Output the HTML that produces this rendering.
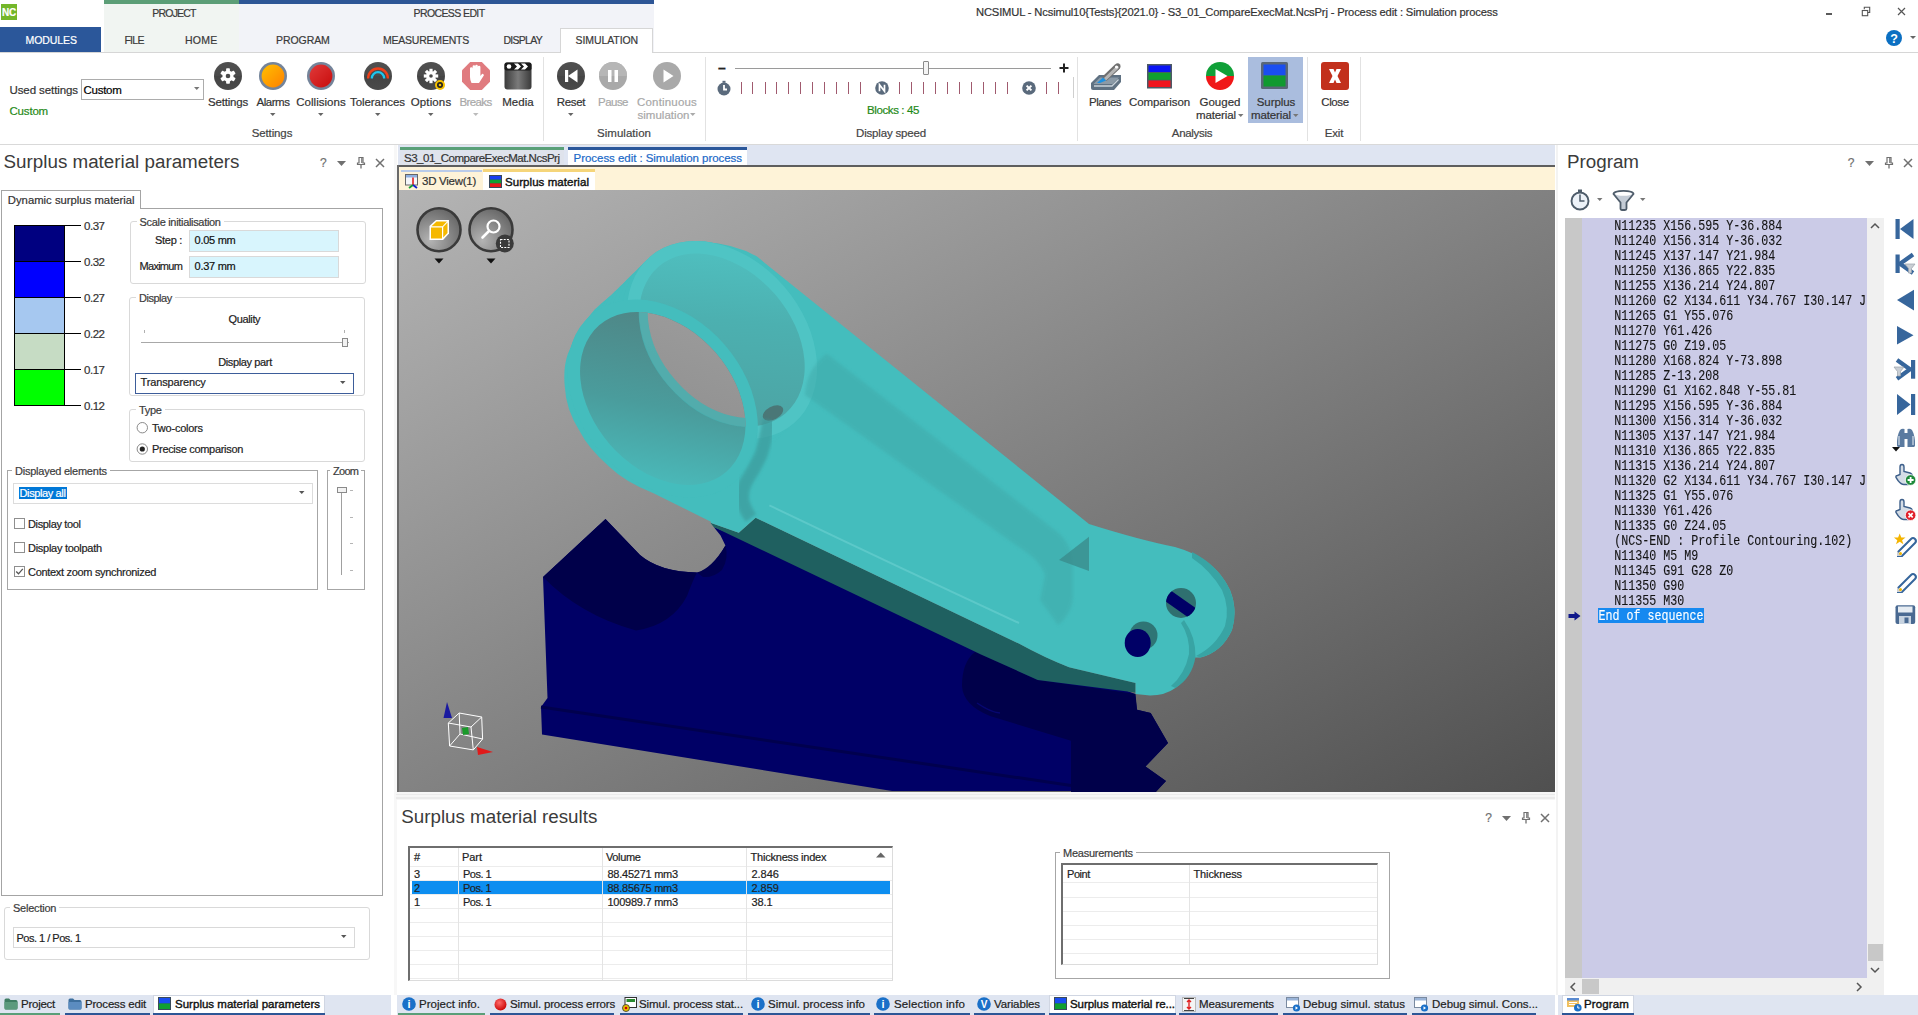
<!DOCTYPE html>
<html><head><meta charset="utf-8"><title>NCSIMUL</title>
<style>
*{margin:0;padding:0;box-sizing:border-box}
html,body{width:1918px;height:1015px;overflow:hidden;background:#fff;font-family:"Liberation Sans",sans-serif;color:#333;position:relative}
.a{position:absolute}
.t{position:absolute;white-space:nowrap;line-height:1;-webkit-text-stroke:0.2px currentColor}
svg{position:absolute;overflow:visible}
</style></head><body>
<div class="a" style="left:1px;top:4px;width:16px;height:16px;background:#74b72a;"></div>
<div class="t" style="left:2.00px;top:8.04px;font-size:10px;color:#fff;font-weight:bold;letter-spacing:-0.222px;">NC</div>
<div class="a" style="left:0px;top:27px;width:101px;height:25px;background:#2b579a;"></div>
<div class="t" style="left:25.60px;top:34.91px;font-size:10.5px;color:#fff;letter-spacing:-0.089px;">MODULES</div>
<div class="a" style="left:104px;top:0px;width:135px;height:53px;background:#f1f5f2;"></div>
<div class="a" style="left:104px;top:0px;width:135px;height:4px;background:#5c9e77;"></div>
<div class="a" style="left:239px;top:0px;width:415px;height:53px;background:#f2f3f8;"></div>
<div class="a" style="left:239px;top:0px;width:415px;height:4px;background:#2d5696;"></div>
<div class="a" style="left:0px;top:52px;width:1918px;height:1px;background:#d6d6d6;"></div>
<div class="t" style="left:152.30px;top:8.01px;font-size:10.5px;color:#3a3a3a;letter-spacing:-0.800px;">PROJECT</div>
<div class="t" style="left:413.50px;top:8.01px;font-size:10.5px;color:#3a3a3a;letter-spacing:-0.598px;">PROCESS EDIT</div>
<div class="t" style="left:124.40px;top:34.91px;font-size:10.5px;color:#3a3a3a;letter-spacing:-0.694px;">FILE</div>
<div class="t" style="left:185.00px;top:34.91px;font-size:10.5px;color:#3a3a3a;letter-spacing:0.250px;">HOME</div>
<div class="t" style="left:276.00px;top:34.91px;font-size:10.5px;color:#3a3a3a;letter-spacing:-0.065px;">PROGRAM</div>
<div class="t" style="left:383.00px;top:34.91px;font-size:10.5px;color:#3a3a3a;letter-spacing:-0.223px;">MEASUREMENTS</div>
<div class="t" style="left:503.50px;top:34.91px;font-size:10.5px;color:#3a3a3a;letter-spacing:-0.739px;">DISPLAY</div>
<div class="a" style="left:560px;top:28px;width:93px;height:25px;background:#fff;border:1px solid #d6d6d6;border-bottom:none"></div>
<div class="t" style="left:575.60px;top:34.91px;font-size:10.5px;color:#3a3a3a;letter-spacing:-0.089px;">SIMULATION</div>
<div class="t" style="left:976.00px;top:7.42px;font-size:11.2px;color:#333;letter-spacing:-0.152px;">NCSIMUL - Ncsimul10{Tests}{2021.0} - S3_01_CompareExecMat.NcsPrj - Process edit : Simulation process</div>
<div class="a" style="left:1826px;top:13px;width:6px;height:2px;background:#5a5a5a;"></div>
<svg style="left:1860px;top:5px" width="12" height="12" viewBox="0 0 12 12"><path d="M4.3 4.3V2.3H9.7V7.5H7.7" fill="none" stroke="#555" stroke-width="1.1"/><rect x="2.3" y="5.5" width="5.4" height="5.2" fill="none" stroke="#555" stroke-width="1.1"/></svg>
<svg style="left:1896px;top:6px" width="11" height="11" viewBox="0 0 11 11"><path d="M2 2L9 9M9 2L2 9" stroke="#555" stroke-width="1.2"/></svg>
<svg style="left:1885.2px;top:28.7px" width="18" height="18" viewBox="0 0 18 18"><circle cx="9" cy="9" r="8" fill="#0b6fc2"/><text x="9" y="13.6" font-family="Liberation Sans" font-weight="bold" font-size="12.5" fill="#fff" text-anchor="middle">?</text></svg>
<svg style="left:1910px;top:35.5px" width="7" height="5" viewBox="0 0 7 5"><path d="M0 0H6L3 3Z" fill="#666"/></svg>
<div class="a" style="left:0px;top:144px;width:1918px;height:1px;background:#d9d9d9;"></div>
<div class="t" style="left:9.50px;top:84.77px;font-size:11.5px;color:#333;letter-spacing:-0.090px;">Used settings</div>
<div class="a" style="left:81px;top:79px;width:123px;height:21px;border:1px solid #acacac;background:#fff"></div>
<div class="t" style="left:83.50px;top:84.77px;font-size:11.5px;color:#000;letter-spacing:-0.270px;">Custom</div>
<svg style="left:194px;top:87px" width="6" height="4" viewBox="0 0 6 4"><path d="M0 0H5.5L2.75 3Z" fill="#777"/></svg>
<div class="t" style="left:9.50px;top:105.77px;font-size:11.5px;color:#1f8a18;letter-spacing:-0.187px;">Custom</div>
<svg style="left:214px;top:62px" width="28" height="28" viewBox="0 0 28 28"><defs><linearGradient id="gd" x1="0" y1="0" x2="0" y2="1"><stop offset="0" stop-color="#505050"/><stop offset="0.5" stop-color="#4a4a4a"/><stop offset="0.5" stop-color="#444"/><stop offset="1" stop-color="#4a4a4a"/></linearGradient></defs><circle cx="14" cy="14" r="14" fill="url(#gd)"/><g fill="#fff"><circle cx="14" cy="14" r="5.6"/><rect x="12.1" y="6.2" width="3.8" height="4" rx="0.8" transform="rotate(0 14 14)"/><rect x="12.1" y="6.2" width="3.8" height="4" rx="0.8" transform="rotate(60 14 14)"/><rect x="12.1" y="6.2" width="3.8" height="4" rx="0.8" transform="rotate(120 14 14)"/><rect x="12.1" y="6.2" width="3.8" height="4" rx="0.8" transform="rotate(180 14 14)"/><rect x="12.1" y="6.2" width="3.8" height="4" rx="0.8" transform="rotate(240 14 14)"/><rect x="12.1" y="6.2" width="3.8" height="4" rx="0.8" transform="rotate(300 14 14)"/></g><circle cx="14" cy="14" r="2.3" fill="#4a4a4a"/></svg>
<svg style="left:259px;top:62px" width="28" height="28" viewBox="0 0 28 28"><defs><linearGradient id="ga" x1="0" y1="0" x2="1" y2="1"><stop offset="0" stop-color="#ffc000"/><stop offset="1" stop-color="#ff8000"/></linearGradient></defs><circle cx="14" cy="14" r="14" fill="#74849a"/><circle cx="14" cy="14" r="11.4" fill="url(#ga)"/></svg>
<svg style="left:307px;top:62px" width="28" height="28" viewBox="0 0 28 28"><defs><linearGradient id="gc" x1="0" y1="0" x2="1" y2="1"><stop offset="0" stop-color="#e03a3a"/><stop offset="1" stop-color="#c80c0c"/></linearGradient></defs><circle cx="14" cy="14" r="14" fill="#74849a"/><circle cx="14" cy="14" r="11.4" fill="url(#gc)"/></svg>
<svg style="left:364px;top:62px" width="28" height="28" viewBox="0 0 28 28"><circle cx="14" cy="14" r="14" fill="url(#gd)"/><path d="M4.1 16.4A9.9 9.9 0 0 1 23.9 16.4" fill="none" stroke="#f0401a" stroke-width="2.3"/><path d="M7.8 16.4A6.2 6.2 0 0 1 20.2 16.4" fill="none" stroke="#1cc8f0" stroke-width="2.3"/></svg>
<svg style="left:417px;top:62px" width="30" height="30" viewBox="0 0 30 30"><circle cx="14" cy="14" r="14" fill="url(#gd)"/><g fill="#fff"><circle cx="14" cy="14" r="4.8"/><rect x="12.4" y="6.8" width="3.2" height="3.6" transform="rotate(0 14 14)"/><rect x="12.4" y="6.8" width="3.2" height="3.6" transform="rotate(45 14 14)"/><rect x="12.4" y="6.8" width="3.2" height="3.6" transform="rotate(90 14 14)"/><rect x="12.4" y="6.8" width="3.2" height="3.6" transform="rotate(135 14 14)"/><rect x="12.4" y="6.8" width="3.2" height="3.6" transform="rotate(180 14 14)"/><rect x="12.4" y="6.8" width="3.2" height="3.6" transform="rotate(225 14 14)"/><rect x="12.4" y="6.8" width="3.2" height="3.6" transform="rotate(270 14 14)"/><rect x="12.4" y="6.8" width="3.2" height="3.6" transform="rotate(315 14 14)"/></g><circle cx="14" cy="14" r="1.8" fill="#4a4a4a"/><circle cx="23" cy="23" r="5" fill="#f4c000"/><circle cx="23" cy="23" r="3" fill="#222"/><circle cx="23" cy="23" r="1.3" fill="#f4c000"/></svg>
<svg style="left:462px;top:62px" width="28" height="28" viewBox="0 0 28 28"><path d="M8.2 0H19.8L28 8.2V19.8L19.8 28H8.2L0 19.8V8.2Z" fill="#e07b7f"/><path d="M8 11V6.5a1.3 1.3 0 0 1 2.6 0V11V4.5a1.3 1.3 0 0 1 2.6 0V11V4a1.3 1.3 0 0 1 2.6 0V11V5a1.3 1.3 0 0 1 2.6 0V14L20 12a1.3 1.3 0 0 1 1.8 1.6L17 21H9.5Q8 18 8 15Z" fill="#fff"/></svg>
<svg style="left:504px;top:62px" width="28" height="28" viewBox="0 0 28 28"><defs><linearGradient id="gm" x1="0" y1="0" x2="1" y2="0"><stop offset="0" stop-color="#3a3a3a"/><stop offset="0.5" stop-color="#7a7a7a"/><stop offset="1" stop-color="#3a3a3a"/></linearGradient></defs><rect x="0.5" y="0.5" width="27" height="27" rx="3" fill="url(#gm)"/><rect x="0.5" y="0.5" width="27" height="8" rx="2" fill="#1a1a1a"/><circle cx="5" cy="4.5" r="2.3" fill="#fff"/><path d="M10 1.5H14L17 4.5L14 7.5H10L13 4.5Z M17 1.5H21L24 4.5L21 7.5H17L20 4.5Z" fill="#fff"/></svg>
<svg style="left:557px;top:62px" width="28" height="28" viewBox="0 0 28 28"><circle cx="14" cy="14" r="14" fill="url(#gd)"/><rect x="8" y="8" width="3.2" height="12" fill="#fff"/><path d="M20.5 7.5V20.5L11 14Z" fill="#fff"/></svg>
<svg style="left:599px;top:62px" width="28" height="28" viewBox="0 0 28 28"><circle cx="14" cy="14" r="14" fill="#a9a9a9"/><circle cx="14" cy="14" r="14" fill="#b6b6b6" clip-path="inset(0 0 50% 0)"/><rect x="9" y="8" width="3.5" height="12" fill="#fff"/><rect x="15.5" y="8" width="3.5" height="12" fill="#fff"/></svg>
<svg style="left:653px;top:62px" width="28" height="28" viewBox="0 0 28 28"><circle cx="14" cy="14" r="14" fill="#a9a9a9"/><path d="M10.5 7.5V20.5L20.5 14Z" fill="#fff"/></svg>
<div class="t" style="left:208.00px;top:97.27px;font-size:11.5px;color:#333;letter-spacing:-0.194px;">Settings</div>
<div class="t" style="left:256.50px;top:97.27px;font-size:11.5px;color:#333;letter-spacing:-0.463px;">Alarms</div>
<div class="t" style="left:296.25px;top:97.27px;font-size:11.5px;color:#333;letter-spacing:0.029px;">Collisions</div>
<div class="t" style="left:350.00px;top:97.27px;font-size:11.5px;color:#333;letter-spacing:-0.061px;">Tolerances</div>
<div class="t" style="left:410.75px;top:97.27px;font-size:11.5px;color:#333;letter-spacing:0.124px;">Options</div>
<div class="t" style="left:459.50px;top:97.27px;font-size:11.5px;color:#a8a8a8;letter-spacing:-0.632px;">Breaks</div>
<div class="t" style="left:502.25px;top:97.27px;font-size:11.5px;color:#333;letter-spacing:0.036px;">Media</div>
<div class="t" style="left:556.75px;top:97.27px;font-size:11.5px;color:#333;letter-spacing:-0.308px;">Reset</div>
<div class="t" style="left:598.00px;top:97.27px;font-size:11.5px;color:#a8a8a8;letter-spacing:-0.522px;">Pause</div>
<div class="t" style="left:637.00px;top:97.27px;font-size:11.5px;color:#a8a8a8;letter-spacing:0.182px;">Continuous</div>
<div class="t" style="left:637.50px;top:109.87px;font-size:11.5px;color:#a8a8a8;letter-spacing:0.023px;">simulation</div>
<svg style="left:690px;top:113px" width="6" height="4" viewBox="0 0 6 4"><path d="M0 0H5.5L2.75 3Z" fill="#aaa"/></svg>
<svg style="left:270px;top:112.5px" width="6" height="4" viewBox="0 0 6 4"><path d="M0 0H5.5L2.75 3Z" fill="#666"/></svg>
<svg style="left:318px;top:112.5px" width="6" height="4" viewBox="0 0 6 4"><path d="M0 0H5.5L2.75 3Z" fill="#666"/></svg>
<svg style="left:374.5px;top:112.5px" width="6" height="4" viewBox="0 0 6 4"><path d="M0 0H5.5L2.75 3Z" fill="#666"/></svg>
<svg style="left:428px;top:112.5px" width="6" height="4" viewBox="0 0 6 4"><path d="M0 0H5.5L2.75 3Z" fill="#666"/></svg>
<svg style="left:472.5px;top:112.5px" width="6" height="4" viewBox="0 0 6 4"><path d="M0 0H5.5L2.75 3Z" fill="#bbb"/></svg>
<svg style="left:568px;top:112.5px" width="6" height="4" viewBox="0 0 6 4"><path d="M0 0H5.5L2.75 3Z" fill="#666"/></svg>
<div class="t" style="left:251.75px;top:128.27px;font-size:11.5px;color:#444;letter-spacing:-0.132px;">Settings</div>
<div class="t" style="left:597.00px;top:128.27px;font-size:11.5px;color:#444;letter-spacing:0.031px;">Simulation</div>
<div class="t" style="left:856.00px;top:128.27px;font-size:11.5px;color:#444;letter-spacing:-0.172px;">Display speed</div>
<div class="t" style="left:1171.75px;top:128.27px;font-size:11.5px;color:#444;letter-spacing:-0.290px;">Analysis</div>
<div class="t" style="left:1324.75px;top:128.27px;font-size:11.5px;color:#444;letter-spacing:-0.168px;">Exit</div>
<div class="a" style="left:543px;top:57px;width:1px;height:84px;background:#e2e2e2;"></div>
<div class="a" style="left:705px;top:57px;width:1px;height:84px;background:#e2e2e2;"></div>
<div class="a" style="left:1077px;top:57px;width:1px;height:84px;background:#e2e2e2;"></div>
<div class="a" style="left:1307px;top:57px;width:1px;height:84px;background:#e2e2e2;"></div>
<div class="a" style="left:1360px;top:57px;width:1px;height:84px;background:#e2e2e2;"></div>
<div class="t" style="left:717.91px;top:61.15px;font-size:14px;color:#222;font-weight:bold;">–</div>
<div class="a" style="left:735px;top:68px;width:316px;height:1px;background:#9a9a9a;"></div>
<div class="a" style="left:923px;top:61px;width:6px;height:14px;background:#f4f4f4;border:1px solid #8a8a8a;border-radius:1px"></div>
<svg style="left:1058px;top:62px" width="12" height="12" viewBox="0 0 12 12"><path d="M6 1.5V10.5M1.5 6H10.5" stroke="#222" stroke-width="2"/></svg>
<div class="a" style="left:741px;top:82px;width:1px;height:12px;background:#a05a6e;"></div>
<div class="a" style="left:752px;top:82px;width:1px;height:12px;background:#a05a6e;"></div>
<div class="a" style="left:765px;top:82px;width:1px;height:12px;background:#a05a6e;"></div>
<div class="a" style="left:776px;top:82px;width:1px;height:12px;background:#a05a6e;"></div>
<div class="a" style="left:788px;top:82px;width:1px;height:12px;background:#a05a6e;"></div>
<div class="a" style="left:800px;top:82px;width:1px;height:12px;background:#a05a6e;"></div>
<div class="a" style="left:812px;top:82px;width:1px;height:12px;background:#a05a6e;"></div>
<div class="a" style="left:824px;top:82px;width:1px;height:12px;background:#a05a6e;"></div>
<div class="a" style="left:836px;top:82px;width:1px;height:12px;background:#a05a6e;"></div>
<div class="a" style="left:848px;top:82px;width:1px;height:12px;background:#a05a6e;"></div>
<div class="a" style="left:860px;top:82px;width:1px;height:12px;background:#a05a6e;"></div>
<div class="a" style="left:899px;top:82px;width:1px;height:12px;background:#a05a6e;"></div>
<div class="a" style="left:911px;top:82px;width:1px;height:12px;background:#a05a6e;"></div>
<div class="a" style="left:923px;top:82px;width:1px;height:12px;background:#a05a6e;"></div>
<div class="a" style="left:935px;top:82px;width:1px;height:12px;background:#a05a6e;"></div>
<div class="a" style="left:947px;top:82px;width:1px;height:12px;background:#a05a6e;"></div>
<div class="a" style="left:959px;top:82px;width:1px;height:12px;background:#a05a6e;"></div>
<div class="a" style="left:971px;top:82px;width:1px;height:12px;background:#a05a6e;"></div>
<div class="a" style="left:983px;top:82px;width:1px;height:12px;background:#a05a6e;"></div>
<div class="a" style="left:995px;top:82px;width:1px;height:12px;background:#a05a6e;"></div>
<div class="a" style="left:1007px;top:82px;width:1px;height:12px;background:#a05a6e;"></div>
<div class="a" style="left:1046px;top:82px;width:1px;height:12px;background:#a05a6e;"></div>
<div class="a" style="left:1058px;top:82px;width:1px;height:12px;background:#a05a6e;"></div>
<svg style="left:717px;top:80px" width="14" height="16" viewBox="0 0 14 16"><circle cx="7" cy="9" r="6.5" fill="#5a6a7c"/><rect x="5.5" y="0.8" width="3" height="2" fill="#5a6a7c"/><path d="M7 5V9.5H10" fill="none" stroke="#fff" stroke-width="1.8"/></svg>
<svg style="left:875px;top:81px" width="14" height="14" viewBox="0 0 14 14"><circle cx="7" cy="7" r="6.8" fill="#5a6a7c"/><path d="M4.5 10.2V3.8L9.5 10.2V3.8" fill="none" stroke="#fff" stroke-width="1.7"/></svg>
<svg style="left:1022px;top:81px" width="14" height="14" viewBox="0 0 14 14"><circle cx="7" cy="7" r="6.8" fill="#5a6a7c"/><path d="M4.6 4.6L9.4 9.4M9.4 4.6L4.6 9.4" stroke="#fff" stroke-width="2"/></svg>
<div class="a" style="left:1073px;top:77px;width:1px;height:21px;background:#cfcfcf;"></div>
<div class="t" style="left:867.00px;top:105.07px;font-size:11.5px;color:#1f8a18;letter-spacing:-0.386px;">Blocks : 45</div>
<div class="a" style="left:1248px;top:57px;width:55px;height:66px;background:#aabdde"></div>
<svg style="left:1090px;top:61px" width="32" height="32" viewBox="0 0 32 32"><path d="M1 22L9 14H31V21L24 29H3Q1 29 1 27Z" fill="#5f7182"/><path d="M3.5 23L10 16.5H29L22.5 23Z" fill="#8b9aa7"/><path d="M4 25H22L28.5 18.5" fill="none" stroke="#c9d2da" stroke-width="1.3"/><path d="M12 16L25 3.5Q28 1 30 3.5Q31.5 6 29 8.5L16.5 20Z" fill="#6f6f6f"/><path d="M14 17L26 5.5Q27.5 4.5 28.5 5.5Q29.5 6.8 28 8L16 19.5Z" fill="#b5b5b5"/><circle cx="26.5" cy="6" r="1.6" fill="#fff"/><path d="M7 22L13 16.5L16 19.5L10 22Z" fill="#1e90e0"/></svg>
<svg style="left:1147px;top:64px" width="26" height="25" viewBox="0 0 26 25"><rect x="0" y="0" width="25" height="24.5" fill="#4d5a66"/><rect x="1.5" y="1.5" width="22" height="6.5" fill="#0a14f5"/><rect x="1.5" y="8.8" width="22" height="7" fill="#10a030"/><rect x="1.5" y="16.5" width="22" height="6.5" fill="#f0141e"/></svg>
<svg style="left:1206px;top:62px" width="28" height="28" viewBox="0 0 28 28"><path d="M0 14A14 14 0 0 1 28 14Z" fill="#10a038"/><path d="M0 14A14 14 0 0 0 28 14Z" fill="#f01818"/><path d="M9.5 7V21L21.5 14Z" fill="#fff"/></svg>
<svg style="left:1261px;top:62px" width="28" height="28" viewBox="0 0 28 28"><rect x="0" y="0" width="27" height="27" rx="1.5" fill="#4b5866" opacity="0.85"/><rect x="2.5" y="2.5" width="22" height="11" fill="#1a4ef0"/><rect x="2.5" y="13.5" width="22" height="11" fill="#109a30"/></svg>
<svg style="left:1321px;top:62px" width="28" height="28" viewBox="0 0 28 28"><rect x="0" y="0" width="28" height="28" rx="3" fill="#c2301c"/><path d="M8 7H12.5L14 10.5L15.5 7H20L16.5 14L20 21H15.5L14 17.5L12.5 21H8L11.5 14Z" fill="#fff"/></svg>
<div class="t" style="left:1089.00px;top:97.27px;font-size:11.5px;color:#333;letter-spacing:-0.527px;">Planes</div>
<div class="t" style="left:1129.00px;top:97.27px;font-size:11.5px;color:#333;letter-spacing:-0.100px;">Comparison</div>
<div class="t" style="left:1199.50px;top:97.27px;font-size:11.5px;color:#333;letter-spacing:0.013px;">Gouged</div>
<div class="t" style="left:1196.00px;top:109.87px;font-size:11.5px;color:#333;letter-spacing:-0.113px;">material</div>
<svg style="left:1238px;top:113.5px" width="6" height="4" viewBox="0 0 6 4"><path d="M0 0H5.5L2.75 3Z" fill="#777"/></svg>
<div class="t" style="left:1256.75px;top:97.27px;font-size:11.5px;color:#333;letter-spacing:-0.070px;">Surplus</div>
<div class="t" style="left:1251.00px;top:109.87px;font-size:11.5px;color:#333;letter-spacing:-0.113px;">material</div>
<svg style="left:1293px;top:113.5px" width="6" height="4" viewBox="0 0 6 4"><path d="M0 0H5.5L2.75 3Z" fill="#777"/></svg>
<div class="t" style="left:1321.25px;top:97.27px;font-size:11.5px;color:#333;letter-spacing:-0.380px;">Close</div>
<div class="t" style="left:3.60px;top:152.79px;font-size:18.8px;color:#3b3b3b;-webkit-text-stroke:0;">Surplus material parameters</div>
<div class="t" style="left:319.96px;top:157.04px;font-size:12px;color:#707070;">?</div>
<svg style="left:337.4px;top:160.7px" width="10" height="6" viewBox="0 0 10 6"><path d="M0 0H9L4.5 5Z" fill="#707070"/></svg>
<svg style="left:357.3px;top:156.7px" width="8" height="12" viewBox="0 0 8 12"><path d="M2 0.5H6V6H7.5V7.5H0.5V6H2Z" fill="none" stroke="#707070" stroke-width="1.2"/><path d="M4 7.5V11.5" stroke="#707070" stroke-width="1.3"/><path d="M4.8 1V6" stroke="#707070" stroke-width="1.2"/></svg>
<svg style="left:375.3px;top:157.7px" width="10" height="10" viewBox="0 0 10 10"><path d="M1 1L9 9M9 1L1 9" stroke="#707070" stroke-width="1.5"/></svg>
<div class="a" style="left:1px;top:208px;width:382px;height:688px;border:1px solid #a4a4a4"></div>
<div class="a" style="left:1px;top:190px;width:140px;height:19px;border:1px solid #a4a4a4;border-bottom:none;background:#fff"></div>
<div class="t" style="left:7.80px;top:194.93px;font-size:11.3px;color:#333;">Dynamic surplus material</div>
<div class="a" style="left:14px;top:225px;width:51px;height:36px;background:#000080;"></div>
<div class="a" style="left:14px;top:261px;width:51px;height:36px;background:#0000ff;"></div>
<div class="a" style="left:14px;top:297px;width:51px;height:36px;background:#a6c8f0;"></div>
<div class="a" style="left:14px;top:333px;width:51px;height:36px;background:#c6dcc4;"></div>
<div class="a" style="left:14px;top:369px;width:51px;height:36px;background:#00ff00;"></div>
<div class="a" style="left:14px;top:225px;width:51px;height:181px;border:1px solid #000"></div>
<div class="a" style="left:14px;top:225px;width:51px;height:1px;background:#000;"></div>
<div class="a" style="left:65px;top:225px;width:16px;height:1px;background:#000;"></div>
<div class="a" style="left:14px;top:261px;width:51px;height:1px;background:#000;"></div>
<div class="a" style="left:65px;top:261px;width:16px;height:1px;background:#000;"></div>
<div class="a" style="left:14px;top:297px;width:51px;height:1px;background:#000;"></div>
<div class="a" style="left:65px;top:297px;width:16px;height:1px;background:#000;"></div>
<div class="a" style="left:14px;top:333px;width:51px;height:1px;background:#000;"></div>
<div class="a" style="left:65px;top:333px;width:16px;height:1px;background:#000;"></div>
<div class="a" style="left:14px;top:369px;width:51px;height:1px;background:#000;"></div>
<div class="a" style="left:65px;top:369px;width:16px;height:1px;background:#000;"></div>
<div class="a" style="left:14px;top:405px;width:51px;height:1px;background:#000;"></div>
<div class="a" style="left:65px;top:405px;width:16px;height:1px;background:#000;"></div>
<div class="t" style="left:84.00px;top:221.27px;font-size:11.5px;color:#333;letter-spacing:-0.471px;">0.37</div>
<div class="t" style="left:84.00px;top:257.27px;font-size:11.5px;color:#333;letter-spacing:-0.471px;">0.32</div>
<div class="t" style="left:84.00px;top:293.27px;font-size:11.5px;color:#333;letter-spacing:-0.471px;">0.27</div>
<div class="t" style="left:84.00px;top:329.27px;font-size:11.5px;color:#333;letter-spacing:-0.471px;">0.22</div>
<div class="t" style="left:84.00px;top:365.27px;font-size:11.5px;color:#333;letter-spacing:-0.471px;">0.17</div>
<div class="t" style="left:84.00px;top:401.27px;font-size:11.5px;color:#333;letter-spacing:-0.471px;">0.12</div>
<div class="a" style="left:130px;top:221px;width:236px;height:63px;border:1px solid #d9d9d9;border-radius:3px;"></div>
<div class="a" style="left:136.6px;top:218px;width:87px;height:6px;background:#fff;"></div>
<div class="t" style="left:139.60px;top:216.69px;font-size:11px;color:#3c3c3c;letter-spacing:-0.322px;">Scale initialisation</div>
<div class="t" style="left:155.00px;top:235.49px;font-size:11px;color:#222;letter-spacing:-0.290px;">Step :</div>
<div class="a" style="left:189px;top:230px;width:150px;height:22px;border:1px solid #d9d9d9;background:#d8f5fd"></div>
<div class="t" style="left:194.60px;top:235.29px;font-size:11px;color:#111;letter-spacing:-0.285px;">0.05 mm</div>
<div class="t" style="left:139.60px;top:261.19px;font-size:11px;color:#222;letter-spacing:-0.738px;">Maximum</div>
<div class="a" style="left:189px;top:256px;width:150px;height:22px;border:1px solid #d9d9d9;background:#d8f5fd"></div>
<div class="t" style="left:194.60px;top:261.09px;font-size:11px;color:#111;letter-spacing:-0.285px;">0.37 mm</div>
<div class="a" style="left:129px;top:297px;width:236px;height:99px;border:1px solid #d9d9d9;border-radius:3px;"></div>
<div class="a" style="left:136px;top:294px;width:38.7px;height:6px;background:#fff;"></div>
<div class="t" style="left:139.00px;top:292.69px;font-size:11px;color:#3c3c3c;letter-spacing:-0.481px;">Display</div>
<div class="t" style="left:228.60px;top:313.89px;font-size:11px;color:#222;letter-spacing:-0.376px;">Quality</div>
<div class="a" style="left:141px;top:342px;width:208px;height:1px;background:#a8a8a8;"></div>
<div class="a" style="left:144px;top:330px;width:1px;height:3px;background:#b0b0b0;"></div>
<div class="a" style="left:344px;top:330px;width:1px;height:3px;background:#b0b0b0;"></div>
<div class="a" style="left:342px;top:338px;width:6px;height:9px;border:1px solid #8a8a8a;background:#f2f2f2"></div>
<div class="t" style="left:218.15px;top:356.89px;font-size:11px;color:#222;letter-spacing:-0.365px;">Display part</div>
<div class="a" style="left:135px;top:373px;width:219px;height:21px;border:1px solid #3d5d9a;background:#fff"></div>
<div class="t" style="left:140.50px;top:377.49px;font-size:11px;color:#222;letter-spacing:-0.145px;">Transparency</div>
<svg style="left:340px;top:381px" width="6" height="4" viewBox="0 0 6 4"><path d="M0 0H5.5L2.75 3Z" fill="#555"/></svg>
<div class="a" style="left:129px;top:409px;width:236px;height:53px;border:1px solid #d9d9d9;border-radius:3px;"></div>
<div class="a" style="left:136px;top:406px;width:28.5px;height:6px;background:#fff;"></div>
<div class="t" style="left:139.00px;top:404.89px;font-size:11px;color:#3c3c3c;letter-spacing:-0.337px;">Type</div>
<svg style="left:136px;top:421px" width="13" height="34" viewBox="0 0 13 34"><circle cx="6.3" cy="6.7" r="5.2" fill="#fff" stroke="#8a8a8a" stroke-width="1"/><circle cx="6.3" cy="28" r="5.2" fill="#fff" stroke="#8a8a8a" stroke-width="1"/><circle cx="6.3" cy="28" r="2.6" fill="#222"/></svg>
<div class="t" style="left:152.00px;top:422.59px;font-size:11px;color:#222;letter-spacing:-0.238px;">Two-colors</div>
<div class="t" style="left:152.00px;top:443.89px;font-size:11px;color:#222;letter-spacing:-0.311px;">Precise comparison</div>
<div class="a" style="left:7px;top:470px;width:311px;height:120px;border:1px solid #a6a6a6;"></div>
<div class="a" style="left:12px;top:467px;width:97.7px;height:6px;background:#fff;"></div>
<div class="t" style="left:15.00px;top:465.89px;font-size:11px;color:#3c3c3c;letter-spacing:-0.238px;">Displayed elements</div>
<div class="a" style="left:13px;top:483px;width:300px;height:21px;border:1px solid #dcdcdc;background:#fff"></div>
<div class="a" style="left:19px;top:487px;width:48px;height:12px;background:#0078d7;"></div>
<div class="t" style="left:19.50px;top:487.59px;font-size:11px;color:#fff;letter-spacing:-0.375px;">Display all</div>
<svg style="left:299px;top:491px" width="6" height="4" viewBox="0 0 6 4"><path d="M0 0H5.5L2.75 3Z" fill="#555"/></svg>
<div class="a" style="left:14px;top:518px;width:11px;height:11px;border:1px solid #8f8f8f;background:#fff"></div>
<div class="t" style="left:28.00px;top:518.79px;font-size:11px;color:#222;letter-spacing:-0.347px;">Display tool</div>
<div class="a" style="left:14px;top:542px;width:11px;height:11px;border:1px solid #8f8f8f;background:#fff"></div>
<div class="t" style="left:28.00px;top:542.89px;font-size:11px;color:#222;letter-spacing:-0.279px;">Display toolpath</div>
<div class="a" style="left:14px;top:566px;width:11px;height:11px;border:1px solid #8f8f8f;background:#fff"></div>
<svg style="left:14px;top:566px" width="11" height="11" viewBox="0 0 11 11"><path d="M2.2 5.5L4.5 7.8L8.8 2.8" fill="none" stroke="#555" stroke-width="1.3"/></svg>
<div class="t" style="left:28.00px;top:566.69px;font-size:11px;color:#222;letter-spacing:-0.309px;">Context zoom synchronized</div>
<div class="a" style="left:327px;top:470px;width:38px;height:120px;border:1px solid #a6a6a6;"></div>
<div class="a" style="left:330px;top:467px;width:31.3px;height:6px;background:#fff;"></div>
<div class="t" style="left:333.00px;top:465.89px;font-size:11px;color:#3c3c3c;letter-spacing:-0.704px;">Zoom</div>
<div class="a" style="left:341px;top:490px;width:1px;height:85px;background:#a0a0a0;"></div>
<div class="a" style="left:337px;top:487px;width:10px;height:6px;border:1px solid #8a8a8a;background:#f2f2f2"></div>
<div class="a" style="left:350px;top:490px;width:3px;height:1px;background:#b5b5b5;"></div>
<div class="a" style="left:350px;top:517px;width:3px;height:1px;background:#b5b5b5;"></div>
<div class="a" style="left:350px;top:543px;width:3px;height:1px;background:#b5b5b5;"></div>
<div class="a" style="left:350px;top:570px;width:3px;height:1px;background:#b5b5b5;"></div>
<div class="a" style="left:4px;top:907px;width:366px;height:53px;border:1px solid #d9d9d9;border-radius:3px;"></div>
<div class="a" style="left:10px;top:904px;width:49.2px;height:6px;background:#fff;"></div>
<div class="t" style="left:13.00px;top:902.79px;font-size:11px;color:#3c3c3c;letter-spacing:-0.228px;">Selection</div>
<div class="a" style="left:13px;top:927px;width:342px;height:21px;border:1px solid #d9d9d9;background:#fff"></div>
<div class="t" style="left:16.50px;top:933.09px;font-size:11px;color:#222;letter-spacing:-0.503px;">Pos. 1 / Pos. 1</div>
<svg style="left:341px;top:935px" width="6" height="4" viewBox="0 0 6 4"><path d="M0 0H5.5L2.75 3Z" fill="#555"/></svg>
<div class="a" style="left:394px;top:145px;width:3px;height:850px;background:#f7f7f7;"></div>
<div class="a" style="left:398px;top:145px;width:1157px;height:21px;background:#dfe5f2;"></div>
<div class="a" style="left:400px;top:147px;width:164px;height:3px;background:#5aa078;"></div>
<div class="a" style="left:400px;top:150px;width:164px;height:15px;background:#dfe3ec;"></div>
<div class="t" style="left:404.00px;top:153.17px;font-size:11.5px;color:#333;letter-spacing:-0.490px;">S3_01_CompareExecMat.NcsPrj</div>
<div class="a" style="left:568px;top:147px;width:179px;height:3px;background:#2b579a;"></div>
<div class="a" style="left:568px;top:150px;width:179px;height:16px;background:#fff;"></div>
<div class="t" style="left:573.60px;top:152.87px;font-size:11.5px;color:#1b69c8;letter-spacing:-0.049px;">Process edit : Simulation process</div>
<div class="a" style="left:397px;top:165px;width:1158px;height:2px;background:#5e5e5e;"></div>
<div class="a" style="left:397px;top:165px;width:2px;height:627px;background:#6a6a6a;"></div>
<div class="a" style="left:399px;top:167px;width:1156px;height:23px;background:#fef3d8;"></div>
<div class="a" style="left:401px;top:170px;width:81px;height:2px;background:#b9cbe9;"></div>
<svg style="left:405px;top:174px" width="15" height="15" viewBox="0 0 15 15"><rect x="0.5" y="0.5" width="12" height="10.5" fill="#f4f6fa" stroke="#666"/><rect x="1" y="1" width="11" height="2.5" fill="#8fb0e0"/><path d="M8 3.5V11" stroke="#e02020" stroke-width="1.6"/><path d="M8 11L4 14" stroke="#10a030" stroke-width="1.8"/><path d="M8 11L12 14" stroke="#1020d0" stroke-width="1.8"/></svg>
<div class="t" style="left:422.00px;top:175.77px;font-size:11.5px;color:#333;letter-spacing:-0.267px;">3D View(1)</div>
<div class="a" style="left:483px;top:169px;width:112px;height:21px;background:#fff;"></div>
<div class="a" style="left:483px;top:169px;width:112px;height:3px;background:#f5d57a;"></div>
<svg style="left:489px;top:175px" width="13" height="13" viewBox="0 0 13 13"><rect x="0" y="0" width="13" height="13" fill="#3a4a5a"/><rect x="1" y="1" width="11" height="3.7" fill="#1a3ef0"/><rect x="1" y="4.7" width="11" height="3.7" fill="#10a030"/><rect x="1" y="8.4" width="11" height="3.6" fill="#e81818"/></svg>
<div class="t" style="left:505.00px;top:176.77px;font-size:11.5px;color:#111;letter-spacing:0.057px;-webkit-text-stroke:0.4px #111;">Surplus material</div>
<div class="a" style="left:396px;top:792px;width:1159px;height:8px;background:#f6f6f6;"></div>
<div class="a" style="left:396px;top:794px;width:1159px;height:1px;background:#ebebeb;"></div>
<div class="a" style="left:396px;top:797px;width:1159px;height:2px;background:#ebebeb;"></div>
<div class="t" style="left:401.30px;top:808.29px;font-size:18.8px;color:#3b3b3b;letter-spacing:-0.010px;-webkit-text-stroke:0;">Surplus material results</div>
<div class="t" style="left:1485.26px;top:811.84px;font-size:12px;color:#707070;">?</div>
<svg style="left:1502.4px;top:815.5px" width="10" height="6" viewBox="0 0 10 6"><path d="M0 0H9L4.5 5Z" fill="#707070"/></svg>
<svg style="left:1522.2px;top:811.5px" width="8" height="12" viewBox="0 0 8 12"><path d="M2 0.5H6V6H7.5V7.5H0.5V6H2Z" fill="none" stroke="#707070" stroke-width="1.2"/><path d="M4 7.5V11.5" stroke="#707070" stroke-width="1.3"/><path d="M4.8 1V6" stroke="#707070" stroke-width="1.2"/></svg>
<svg style="left:1540px;top:812.5px" width="10" height="10" viewBox="0 0 10 10"><path d="M1 1L9 9M9 1L1 9" stroke="#707070" stroke-width="1.5"/></svg>
<div class="a" style="left:408px;top:846px;width:485px;height:135px;border:1px solid #dcdcdc;border-top:2px solid #6e6e6e;border-left:2px solid #6e6e6e;background:#fff"></div>
<div class="a" style="left:410px;top:866px;width:482px;height:1px;background:#ececec;"></div>
<div class="a" style="left:410px;top:880px;width:482px;height:1px;background:#ececec;"></div>
<div class="a" style="left:410px;top:894px;width:482px;height:1px;background:#ececec;"></div>
<div class="a" style="left:410px;top:908px;width:482px;height:1px;background:#ececec;"></div>
<div class="a" style="left:410px;top:922px;width:482px;height:1px;background:#ececec;"></div>
<div class="a" style="left:410px;top:936px;width:482px;height:1px;background:#ececec;"></div>
<div class="a" style="left:410px;top:950px;width:482px;height:1px;background:#ececec;"></div>
<div class="a" style="left:410px;top:964px;width:482px;height:1px;background:#ececec;"></div>
<div class="a" style="left:410px;top:978px;width:482px;height:1px;background:#ececec;"></div>
<div class="a" style="left:412px;top:881px;width:478px;height:13px;background:#0d8ef0;"></div>
<div class="a" style="left:458px;top:848px;width:1px;height:132px;background:#e4e4e4;"></div>
<div class="a" style="left:602px;top:848px;width:1px;height:132px;background:#e4e4e4;"></div>
<div class="a" style="left:746px;top:848px;width:1px;height:132px;background:#e4e4e4;"></div>
<div class="t" style="left:414.00px;top:851.99px;font-size:11px;color:#222;">#</div>
<div class="t" style="left:462.00px;top:851.99px;font-size:11px;color:#222;letter-spacing:-0.043px;">Part</div>
<div class="t" style="left:606.00px;top:851.99px;font-size:11px;color:#222;letter-spacing:-0.365px;">Volume</div>
<div class="t" style="left:750.50px;top:851.99px;font-size:11px;color:#222;letter-spacing:-0.205px;">Thickness index</div>
<svg style="left:876px;top:852px" width="10" height="6" viewBox="0 0 10 6"><path d="M0 5.5H9.5L4.75 0.5Z" fill="#666"/></svg>
<div class="t" style="left:414.00px;top:869.29px;font-size:11px;color:#222;">3</div>
<div class="t" style="left:463.00px;top:869.29px;font-size:11px;color:#222;letter-spacing:-0.497px;">Pos. 1</div>
<div class="t" style="left:607.50px;top:869.29px;font-size:11px;color:#222;letter-spacing:-0.248px;">88.45271 mm3</div>
<div class="t" style="left:751.50px;top:869.29px;font-size:11px;color:#222;letter-spacing:-0.045px;">2.846</div>
<div class="t" style="left:414.00px;top:883.19px;font-size:11px;color:#222;">2</div>
<div class="t" style="left:463.00px;top:883.19px;font-size:11px;color:#222;letter-spacing:-0.497px;">Pos. 1</div>
<div class="t" style="left:607.50px;top:883.19px;font-size:11px;color:#222;letter-spacing:-0.248px;">88.85675 mm3</div>
<div class="t" style="left:751.50px;top:883.19px;font-size:11px;color:#222;letter-spacing:-0.045px;">2.859</div>
<div class="t" style="left:414.00px;top:897.19px;font-size:11px;color:#222;">1</div>
<div class="t" style="left:463.00px;top:897.19px;font-size:11px;color:#222;letter-spacing:-0.497px;">Pos. 1</div>
<div class="t" style="left:607.50px;top:897.19px;font-size:11px;color:#222;letter-spacing:-0.248px;">100989.7 mm3</div>
<div class="t" style="left:751.50px;top:897.19px;font-size:11px;color:#222;letter-spacing:-0.102px;">38.1</div>
<div class="a" style="left:1055px;top:852px;width:335px;height:127px;border:1px solid #a6a6a6;"></div>
<div class="a" style="left:1060px;top:849px;width:75.7px;height:6px;background:#fff;"></div>
<div class="t" style="left:1063.00px;top:847.89px;font-size:11px;color:#3c3c3c;letter-spacing:-0.254px;">Measurements</div>
<div class="a" style="left:1061px;top:863px;width:317px;height:102px;border:1px solid #dcdcdc;border-top:2px solid #6e6e6e;border-left:2px solid #6e6e6e;background:#fff"></div>
<div class="a" style="left:1063px;top:882px;width:314px;height:1px;background:#ececec;"></div>
<div class="a" style="left:1063px;top:897px;width:314px;height:1px;background:#ececec;"></div>
<div class="a" style="left:1063px;top:911px;width:314px;height:1px;background:#ececec;"></div>
<div class="a" style="left:1063px;top:925px;width:314px;height:1px;background:#ececec;"></div>
<div class="a" style="left:1063px;top:939px;width:314px;height:1px;background:#ececec;"></div>
<div class="a" style="left:1063px;top:953px;width:314px;height:1px;background:#ececec;"></div>
<div class="a" style="left:1189px;top:865px;width:1px;height:99px;background:#e4e4e4;"></div>
<div class="t" style="left:1067.00px;top:869.19px;font-size:11px;color:#222;letter-spacing:-0.454px;">Point</div>
<div class="t" style="left:1193.50px;top:869.19px;font-size:11px;color:#222;letter-spacing:-0.113px;">Thickness</div>
<div class="a" style="left:1556px;top:145px;width:2px;height:850px;background:#f3f3f3;"></div>
<div class="t" style="left:1567.00px;top:152.79px;font-size:18.8px;color:#3b3b3b;-webkit-text-stroke:0;">Program</div>
<div class="t" style="left:1847.66px;top:156.94px;font-size:12px;color:#707070;">?</div>
<svg style="left:1865.4px;top:160.6px" width="10" height="6" viewBox="0 0 10 6"><path d="M0 0H9L4.5 5Z" fill="#707070"/></svg>
<svg style="left:1885.3px;top:156.6px" width="8" height="12" viewBox="0 0 8 12"><path d="M2 0.5H6V6H7.5V7.5H0.5V6H2Z" fill="none" stroke="#707070" stroke-width="1.2"/><path d="M4 7.5V11.5" stroke="#707070" stroke-width="1.3"/><path d="M4.8 1V6" stroke="#707070" stroke-width="1.2"/></svg>
<svg style="left:1903.2px;top:157.6px" width="10" height="10" viewBox="0 0 10 10"><path d="M1 1L9 9M9 1L1 9" stroke="#707070" stroke-width="1.5"/></svg>
<svg style="left:1570px;top:189px" width="22" height="22" viewBox="0 0 22 22"><circle cx="10" cy="12" r="8.5" fill="#edf2f8" stroke="#4e5c6a" stroke-width="1.9"/><rect x="8" y="0.5" width="4" height="3" fill="#4e5c6a"/><path d="M10 5.5V12H14.5" fill="none" stroke="#4e5c6a" stroke-width="1.5"/></svg>
<svg style="left:1597px;top:198px" width="6" height="4" viewBox="0 0 6 4"><path d="M0 0H5.5L2.75 3Z" fill="#777"/></svg>
<svg style="left:1612px;top:189px" width="24" height="22" viewBox="0 0 24 22"><path d="M1.5 5Q1.5 2 11.5 2Q21.5 2 21.5 5L14.5 13.5V19.5Q14.5 21 13 21H10Q8.5 21 8.5 19.5V13.5Z" fill="#c4ccd6" stroke="#4e5c6a" stroke-width="1.8"/><ellipse cx="11.5" cy="4.8" rx="8.5" ry="2" fill="#fff"/></svg>
<svg style="left:1640px;top:198px" width="6" height="4" viewBox="0 0 6 4"><path d="M0 0H5.5L2.75 3Z" fill="#777"/></svg>
<div class="a" style="left:1565px;top:218px;width:302px;height:760px;background:#cbcbe7;overflow:hidden">
<div class="a" style="left:0px;top:0px;width:17px;height:760px;background:#c8c8c8;"></div>
</div>
<div class="a" style="left:1565px;top:218px;width:301px;height:760px;overflow:hidden">
<div class="t" style="left:49.30px;top:4.35px;font-size:11.67px;color:#141414;font-family:'Liberation Mono',monospace;transform:scaleY(1.18);transform-origin:0 8.94px;-webkit-text-stroke:0.1px #141414;">N11235 X156.595 Y-36.884</div>
<div class="t" style="left:49.30px;top:19.35px;font-size:11.67px;color:#141414;font-family:'Liberation Mono',monospace;transform:scaleY(1.18);transform-origin:0 8.94px;-webkit-text-stroke:0.1px #141414;">N11240 X156.314 Y-36.032</div>
<div class="t" style="left:49.30px;top:34.35px;font-size:11.67px;color:#141414;font-family:'Liberation Mono',monospace;transform:scaleY(1.18);transform-origin:0 8.94px;-webkit-text-stroke:0.1px #141414;">N11245 X137.147 Y21.984</div>
<div class="t" style="left:49.30px;top:49.35px;font-size:11.67px;color:#141414;font-family:'Liberation Mono',monospace;transform:scaleY(1.18);transform-origin:0 8.94px;-webkit-text-stroke:0.1px #141414;">N11250 X136.865 Y22.835</div>
<div class="t" style="left:49.30px;top:64.35px;font-size:11.67px;color:#141414;font-family:'Liberation Mono',monospace;transform:scaleY(1.18);transform-origin:0 8.94px;-webkit-text-stroke:0.1px #141414;">N11255 X136.214 Y24.807</div>
<div class="t" style="left:49.30px;top:79.35px;font-size:11.67px;color:#141414;font-family:'Liberation Mono',monospace;transform:scaleY(1.18);transform-origin:0 8.94px;-webkit-text-stroke:0.1px #141414;">N11260 G2 X134.611 Y34.767 I30.147 J</div>
<div class="t" style="left:49.30px;top:94.35px;font-size:11.67px;color:#141414;font-family:'Liberation Mono',monospace;transform:scaleY(1.18);transform-origin:0 8.94px;-webkit-text-stroke:0.1px #141414;">N11265 G1 Y55.076</div>
<div class="t" style="left:49.30px;top:109.35px;font-size:11.67px;color:#141414;font-family:'Liberation Mono',monospace;transform:scaleY(1.18);transform-origin:0 8.94px;-webkit-text-stroke:0.1px #141414;">N11270 Y61.426</div>
<div class="t" style="left:49.30px;top:124.35px;font-size:11.67px;color:#141414;font-family:'Liberation Mono',monospace;transform:scaleY(1.18);transform-origin:0 8.94px;-webkit-text-stroke:0.1px #141414;">N11275 G0 Z19.05</div>
<div class="t" style="left:49.30px;top:139.35px;font-size:11.67px;color:#141414;font-family:'Liberation Mono',monospace;transform:scaleY(1.18);transform-origin:0 8.94px;-webkit-text-stroke:0.1px #141414;">N11280 X168.824 Y-73.898</div>
<div class="t" style="left:49.30px;top:154.35px;font-size:11.67px;color:#141414;font-family:'Liberation Mono',monospace;transform:scaleY(1.18);transform-origin:0 8.94px;-webkit-text-stroke:0.1px #141414;">N11285 Z-13.208</div>
<div class="t" style="left:49.30px;top:169.35px;font-size:11.67px;color:#141414;font-family:'Liberation Mono',monospace;transform:scaleY(1.18);transform-origin:0 8.94px;-webkit-text-stroke:0.1px #141414;">N11290 G1 X162.848 Y-55.81</div>
<div class="t" style="left:49.30px;top:184.35px;font-size:11.67px;color:#141414;font-family:'Liberation Mono',monospace;transform:scaleY(1.18);transform-origin:0 8.94px;-webkit-text-stroke:0.1px #141414;">N11295 X156.595 Y-36.884</div>
<div class="t" style="left:49.30px;top:199.35px;font-size:11.67px;color:#141414;font-family:'Liberation Mono',monospace;transform:scaleY(1.18);transform-origin:0 8.94px;-webkit-text-stroke:0.1px #141414;">N11300 X156.314 Y-36.032</div>
<div class="t" style="left:49.30px;top:214.35px;font-size:11.67px;color:#141414;font-family:'Liberation Mono',monospace;transform:scaleY(1.18);transform-origin:0 8.94px;-webkit-text-stroke:0.1px #141414;">N11305 X137.147 Y21.984</div>
<div class="t" style="left:49.30px;top:229.35px;font-size:11.67px;color:#141414;font-family:'Liberation Mono',monospace;transform:scaleY(1.18);transform-origin:0 8.94px;-webkit-text-stroke:0.1px #141414;">N11310 X136.865 Y22.835</div>
<div class="t" style="left:49.30px;top:244.35px;font-size:11.67px;color:#141414;font-family:'Liberation Mono',monospace;transform:scaleY(1.18);transform-origin:0 8.94px;-webkit-text-stroke:0.1px #141414;">N11315 X136.214 Y24.807</div>
<div class="t" style="left:49.30px;top:259.35px;font-size:11.67px;color:#141414;font-family:'Liberation Mono',monospace;transform:scaleY(1.18);transform-origin:0 8.94px;-webkit-text-stroke:0.1px #141414;">N11320 G2 X134.611 Y34.767 I30.147 J</div>
<div class="t" style="left:49.30px;top:274.35px;font-size:11.67px;color:#141414;font-family:'Liberation Mono',monospace;transform:scaleY(1.18);transform-origin:0 8.94px;-webkit-text-stroke:0.1px #141414;">N11325 G1 Y55.076</div>
<div class="t" style="left:49.30px;top:289.35px;font-size:11.67px;color:#141414;font-family:'Liberation Mono',monospace;transform:scaleY(1.18);transform-origin:0 8.94px;-webkit-text-stroke:0.1px #141414;">N11330 Y61.426</div>
<div class="t" style="left:49.30px;top:304.35px;font-size:11.67px;color:#141414;font-family:'Liberation Mono',monospace;transform:scaleY(1.18);transform-origin:0 8.94px;-webkit-text-stroke:0.1px #141414;">N11335 G0 Z24.05</div>
<div class="t" style="left:49.30px;top:319.35px;font-size:11.67px;color:#141414;font-family:'Liberation Mono',monospace;transform:scaleY(1.18);transform-origin:0 8.94px;-webkit-text-stroke:0.1px #141414;">(NCS-END : Profile Contouring.102)</div>
<div class="t" style="left:49.30px;top:334.35px;font-size:11.67px;color:#141414;font-family:'Liberation Mono',monospace;transform:scaleY(1.18);transform-origin:0 8.94px;-webkit-text-stroke:0.1px #141414;">N11340 M5 M9</div>
<div class="t" style="left:49.30px;top:349.35px;font-size:11.67px;color:#141414;font-family:'Liberation Mono',monospace;transform:scaleY(1.18);transform-origin:0 8.94px;-webkit-text-stroke:0.1px #141414;">N11345 G91 G28 Z0</div>
<div class="t" style="left:49.30px;top:364.35px;font-size:11.67px;color:#141414;font-family:'Liberation Mono',monospace;transform:scaleY(1.18);transform-origin:0 8.94px;-webkit-text-stroke:0.1px #141414;">N11350 G90</div>
<div class="t" style="left:49.30px;top:379.35px;font-size:11.67px;color:#141414;font-family:'Liberation Mono',monospace;transform:scaleY(1.18);transform-origin:0 8.94px;-webkit-text-stroke:0.1px #141414;">N11355 M30</div>
<div class="a" style="left:33px;top:390.20000000000005px;width:106px;height:14.5px;background:#1689f0;"></div>
<div class="t" style="left:33.50px;top:394.35px;font-size:11.67px;color:#fff;font-family:'Liberation Mono',monospace;letter-spacing:0.005px;transform:scaleY(1.18);transform-origin:0 8.94px;-webkit-text-stroke:0.1px #fff;">End of sequence</div>
<svg style="left:3px;top:393px" width="13" height="10" viewBox="0 0 13 10"><path d="M0.5 3H6.5V0.5L12.5 5L6.5 9.5V7H0.5Z" fill="#10188a"/></svg>
</div>
<div class="a" style="left:1867px;top:218px;width:17px;height:777px;background:#f0f0f0;"></div>
<div class="a" style="left:1565px;top:978px;width:302px;height:17px;background:#f0f0f0;"></div>
<div class="a" style="left:1868px;top:944px;width:15px;height:17px;background:#c8c8c8;"></div>
<div class="a" style="left:1582px;top:979px;width:17px;height:15px;background:#c8c8c8;"></div>
<svg style="left:1870px;top:222px" width="10" height="8" viewBox="0 0 10 8"><path d="M1 6L5 2L9 6" fill="none" stroke="#555" stroke-width="1.5"/></svg>
<svg style="left:1870px;top:966px" width="10" height="8" viewBox="0 0 10 8"><path d="M1 2L5 6L9 2" fill="none" stroke="#555" stroke-width="1.5"/></svg>
<svg style="left:1569px;top:982px" width="8" height="10" viewBox="0 0 8 10"><path d="M6 1L2 5L6 9" fill="none" stroke="#555" stroke-width="1.5"/></svg>
<svg style="left:1855px;top:982px" width="8" height="10" viewBox="0 0 8 10"><path d="M2 1L6 5L2 9" fill="none" stroke="#555" stroke-width="1.5"/></svg>
<svg style="left:1890px;top:210px" width="28" height="420" viewBox="1890 210 28 420"><rect x="1895.5" y="219" width="4.2" height="20" fill="#37669c"/><path d="M1900 229L1913.5 219V239Z" fill="#37669c"/><rect x="1895.5" y="254.5" width="4.2" height="18.5" fill="#37669c"/><path d="M1913 254.5L1900 263.8L1913 273" fill="none" stroke="#37669c" stroke-width="4.2"/><path d="M1905 264H1915L1911.5 268.5V273H1908.5V268.5Z" fill="#c9ced4" stroke="#9aa2aa" stroke-width="0.7"/><path d="M1897 300L1914 289.7V310.4Z" fill="#37669c"/><path d="M1897 326V344.6L1913.5 335.3Z" fill="#37669c"/><rect x="1911" y="360" width="4.2" height="18.7" fill="#37669c"/><path d="M1897 360L1910 369.3L1897 378.7" fill="none" stroke="#37669c" stroke-width="4.2"/><path d="M1894 367H1904L1900.5 371.5V376H1897.5V371.5Z" fill="#c9ced4" stroke="#9aa2aa" stroke-width="0.7"/><rect x="1911" y="394" width="4.2" height="21" fill="#37669c"/><path d="M1897 394V415L1910.5 404.5Z" fill="#37669c"/><path d="M1897 446Q1896.5 436 1900 430Q1902 428 1904.5 429V447H1898Z" fill="#5a7aa0"/><path d="M1915 446Q1915.5 436 1912 430Q1910 428 1907.5 429V447H1914Z" fill="#5a7aa0"/><rect x="1904" y="433" width="4" height="6" fill="#5a7aa0"/><path d="M1899 436V445M1913 436V445" stroke="#b7c6d8" stroke-width="1.6"/><path d="M1892 447H1900L1896 451.5Z" fill="#111"/><path d="M1900 474.5V467.0Q1900 464.5 1902 464.5Q1904 464.5 1904 467.0V471.5L1910 473.0Q1912.5 474.0 1912.5 476.5V479.5Q1912.5 484.5 1908 484.5H1904Q1901 484.5 1898 480.5L1896 477.5Q1895.5 475.5 1897.5 475.5Z" fill="#d5dde6" stroke="#3d5f8a" stroke-width="1.4"/><circle cx="1910.6" cy="480" r="5.3" fill="#1e8a3a" stroke="#fff" stroke-width="0.8"/><path d="M1910.6 477V483M1907.6 480H1913.6" stroke="#fff" stroke-width="1.8"/><path d="M1900 509.5V502.0Q1900 499.5 1902 499.5Q1904 499.5 1904 502.0V506.5L1910 508.0Q1912.5 509.0 1912.5 511.5V514.5Q1912.5 519.5 1908 519.5H1904Q1901 519.5 1898 515.5L1896 512.5Q1895.5 510.5 1897.5 510.5Z" fill="#d5dde6" stroke="#3d5f8a" stroke-width="1.4"/><circle cx="1910.6" cy="515.2" r="5.3" fill="#e0202a" stroke="#fff" stroke-width="0.8"/><path d="M1908.5 513.1L1912.7 517.3M1912.7 513.1L1908.5 517.3" stroke="#fff" stroke-width="1.7"/><path d="M1898 552L1911 539Q1913 537 1915 539Q1917 541 1915 543L1902 556H1898Z" fill="#fff" stroke="#37669c" stroke-width="2"/><path d="M1897 551L1897 556L1902 556Z" fill="#d0d0d0"/><circle cx="1900.5" cy="553.5" r="1.5" fill="#f0b400"/><path d="M1899.7 533.5L1901.3 537.6H1905.5L1902.1 540.2L1903.4 544.3L1899.7 541.8L1896 544.3L1897.3 540.2L1893.9 537.6H1898.1Z" fill="#f4b400"/><path d="M1898 588L1911 575Q1913 573 1915 575Q1917 577 1915 579L1902 592H1898Z" fill="#fff" stroke="#37669c" stroke-width="2"/><path d="M1897 587L1897 592L1902 592Z" fill="#d0d0d0"/><circle cx="1900.5" cy="589.5" r="1.5" fill="#f0b400"/><rect x="1895.5" y="605.3" width="19.7" height="18.7" rx="2" fill="#4a6a92"/><rect x="1898" y="606.5" width="14.5" height="6" fill="#e6ecf2"/><rect x="1899" y="616" width="12" height="8" fill="#c7d3e0"/><rect x="1904.5" y="617.5" width="4" height="5.5" fill="#4a6a92"/></svg>
<div class="a" style="left:0px;top:995px;width:391px;height:20px;background:#dfe5f1;"></div>
<div class="a" style="left:397px;top:995px;width:1158px;height:20px;background:#dfe5f1;"></div>
<div class="a" style="left:1558px;top:995px;width:360px;height:20px;background:#dfe5f1;"></div>
<svg style="left:4px;top:998px" width="14" height="12" viewBox="0 0 14 12"><path d="M0.5 2Q0.5 0.5 2 0.5H5L6.5 2H12Q13.5 2 13.5 3.5V10Q13.5 11.5 12 11.5H2Q0.5 11.5 0.5 10Z" fill="#3f7d63"/><path d="M0.5 4H13.5V10Q13.5 11.5 12 11.5H2Q0.5 11.5 0.5 10Z" fill="#5c9a7e"/></svg>
<div class="t" style="left:21.00px;top:998.97px;font-size:11.5px;color:#222;letter-spacing:-0.256px;">Project</div>
<div class="a" style="left:0px;top:1013px;width:60px;height:2px;background:#5a9e78;"></div>
<svg style="left:68px;top:998px" width="14" height="12" viewBox="0 0 14 12"><path d="M0.5 2Q0.5 0.5 2 0.5H5L6.5 2H12Q13.5 2 13.5 3.5V10Q13.5 11.5 12 11.5H2Q0.5 11.5 0.5 10Z" fill="#3d6f9e"/><path d="M0.5 4H13.5V10Q13.5 11.5 12 11.5H2Q0.5 11.5 0.5 10Z" fill="#5b8cc0"/></svg>
<div class="t" style="left:85.00px;top:998.97px;font-size:11.5px;color:#222;letter-spacing:-0.190px;">Process edit</div>
<div class="a" style="left:65px;top:1013px;width:85px;height:2px;background:#2d5696;"></div>
<div class="a" style="left:153px;top:995px;width:172px;height:18px;background:#fff;border:1px solid #d0d6e2;border-bottom:none"></div>
<svg style="left:158px;top:997px" width="13" height="13" viewBox="0 0 13 13"><rect x="0" y="0" width="13" height="13" fill="#3a4a5a"/><rect x="1" y="1" width="11" height="5.5" fill="#1a4ef0"/><rect x="1" y="6.5" width="11" height="5.5" fill="#10a030"/></svg>
<div class="t" style="left:175.00px;top:998.97px;font-size:11.5px;color:#111;letter-spacing:0.021px;-webkit-text-stroke:0.4px #111;">Surplus material parameters</div>
<div class="a" style="left:153px;top:1013px;width:172px;height:2px;background:#2d5696;"></div>
<svg style="left:402px;top:996.8px" width="14" height="14" viewBox="0 0 14 14"><circle cx="7" cy="7" r="6.8" fill="#1a70c8"/><text x="7" y="11.3" font-family="Liberation Sans" font-weight="bold" font-size="11" fill="#fff" text-anchor="middle">i</text></svg>
<div class="t" style="left:419.00px;top:998.97px;font-size:11.5px;color:#222;letter-spacing:0.021px;">Project info.</div>
<div class="a" style="left:398px;top:1013px;width:87px;height:2px;background:#5a9e78;"></div>
<svg style="left:494px;top:998px" width="13" height="13" viewBox="0 0 13 13"><defs><radialGradient id="rr" cx="0.4" cy="0.35" r="0.7"><stop offset="0" stop-color="#ff6a6a"/><stop offset="1" stop-color="#c80000"/></radialGradient></defs><circle cx="6.5" cy="6.5" r="6" fill="url(#rr)"/></svg>
<div class="t" style="left:510.00px;top:998.97px;font-size:11.5px;color:#222;letter-spacing:-0.173px;">Simul. process errors</div>
<div class="a" style="left:490px;top:1013px;width:124px;height:2px;background:#2d5696;"></div>
<svg style="left:622px;top:997px" width="15" height="15" viewBox="0 0 15 15"><rect x="3" y="0.5" width="11.5" height="10" fill="#fff" stroke="#333" stroke-width="1"/><rect x="4.5" y="2" width="8.5" height="3" fill="#2a8a30"/><circle cx="4" cy="11" r="3.5" fill="#e8c000" stroke="#333" stroke-width="0.8"/><circle cx="4" cy="11" r="1.3" fill="#c00"/></svg>
<div class="t" style="left:639.00px;top:998.97px;font-size:11.5px;color:#222;letter-spacing:-0.124px;">Simul. process stat...</div>
<div class="a" style="left:620px;top:1013px;width:123px;height:2px;background:#2d5696;"></div>
<svg style="left:751px;top:996.8px" width="14" height="14" viewBox="0 0 14 14"><circle cx="7" cy="7" r="6.8" fill="#1a70c8"/><text x="7" y="11.3" font-family="Liberation Sans" font-weight="bold" font-size="11" fill="#fff" text-anchor="middle">i</text></svg>
<div class="t" style="left:768.00px;top:998.97px;font-size:11.5px;color:#222;letter-spacing:-0.008px;">Simul. process info</div>
<div class="a" style="left:748px;top:1013px;width:122px;height:2px;background:#2d5696;"></div>
<svg style="left:876px;top:996.8px" width="14" height="14" viewBox="0 0 14 14"><circle cx="7" cy="7" r="6.8" fill="#1a70c8"/><text x="7" y="11.3" font-family="Liberation Sans" font-weight="bold" font-size="11" fill="#fff" text-anchor="middle">i</text></svg>
<div class="t" style="left:894.00px;top:998.97px;font-size:11.5px;color:#222;letter-spacing:0.140px;">Selection info</div>
<div class="a" style="left:874px;top:1013px;width:96px;height:2px;background:#2d5696;"></div>
<svg style="left:977px;top:996.8px" width="14" height="14" viewBox="0 0 14 14"><circle cx="7" cy="7" r="6.8" fill="#1a70c8"/><text x="7" y="11.3" font-family="Liberation Sans" font-weight="bold" font-size="10" fill="#fff" text-anchor="middle">V</text></svg>
<div class="t" style="left:994.00px;top:998.97px;font-size:11.5px;color:#222;letter-spacing:-0.121px;">Variables</div>
<div class="a" style="left:974px;top:1013px;width:71px;height:2px;background:#2d5696;"></div>
<div class="a" style="left:1049px;top:995px;width:127px;height:18px;background:#fff;border:1px solid #d0d6e2;border-bottom:none"></div>
<svg style="left:1054px;top:997px" width="13" height="13" viewBox="0 0 13 13"><rect x="0" y="0" width="13" height="13" fill="#3a4a5a"/><rect x="1" y="1" width="11" height="5.5" fill="#1a4ef0"/><rect x="1" y="6.5" width="11" height="5.5" fill="#10a030"/></svg>
<div class="t" style="left:1070.00px;top:998.97px;font-size:11.5px;color:#111;letter-spacing:-0.050px;-webkit-text-stroke:0.4px #111;">Surplus material re...</div>
<div class="a" style="left:1049px;top:1013px;width:127px;height:2px;background:#2d5696;"></div>
<svg style="left:1182px;top:997px" width="14" height="15" viewBox="0 0 14 15"><rect x="0.5" y="0.5" width="13" height="14" fill="#f4f4f4" stroke="#bbb"/><path d="M2 1.5H12M2 13.5H12" stroke="#444" stroke-width="1"/><path d="M7 3V12M5 5L7 3L9 5M5 10L7 12L9 10" fill="none" stroke="#e02020" stroke-width="1.4"/></svg>
<div class="t" style="left:1199.00px;top:998.97px;font-size:11.5px;color:#222;letter-spacing:-0.088px;">Measurements</div>
<div class="a" style="left:1179px;top:1013px;width:99px;height:2px;background:#2d5696;"></div>
<svg style="left:1286px;top:997px" width="15" height="15" viewBox="0 0 15 15"><rect x="0.5" y="0.5" width="12" height="10" fill="#fff" stroke="#7a8aa0"/><rect x="1" y="1" width="11" height="2.5" fill="#9ab4d8"/><circle cx="10.5" cy="11" r="3.6" fill="#1a70c8"/><path d="M9.5 9.3V12.7L12 11Z" fill="#fff"/></svg>
<div class="t" style="left:1303.00px;top:998.97px;font-size:11.5px;color:#222;letter-spacing:0.053px;">Debug simul. status</div>
<div class="a" style="left:1283px;top:1013px;width:124px;height:2px;background:#2d5696;"></div>
<svg style="left:1414px;top:997px" width="15" height="15" viewBox="0 0 15 15"><rect x="0.5" y="0.5" width="12" height="10" fill="#fff" stroke="#7a8aa0"/><rect x="1" y="1" width="11" height="2.5" fill="#9ab4d8"/><circle cx="10.5" cy="11" r="3.6" fill="#1a70c8"/><path d="M9.5 9.3V12.7L12 11Z" fill="#fff"/></svg>
<div class="t" style="left:1432.00px;top:998.97px;font-size:11.5px;color:#222;letter-spacing:-0.037px;">Debug simul. Cons...</div>
<div class="a" style="left:1412px;top:1013px;width:124px;height:2px;background:#2d5696;"></div>
<div class="a" style="left:1562px;top:995px;width:72px;height:18px;background:#fff;border:1px solid #d0d6e2;border-bottom:none"></div>
<svg style="left:1567px;top:997px" width="15" height="15" viewBox="0 0 15 15"><rect x="0" y="1" width="12" height="9" fill="#f0c060"/><rect x="0" y="1" width="12" height="2.5" fill="#5a8ad0"/><path d="M2 5.5H10M2 7.5H8" stroke="#fff" stroke-width="1"/><circle cx="10.8" cy="10.8" r="3.8" fill="#1a70c8"/><path d="M10.8 8.6V11H12.6" fill="none" stroke="#fff" stroke-width="1"/></svg>
<div class="t" style="left:1584.00px;top:998.97px;font-size:11.5px;color:#111;letter-spacing:0.129px;-webkit-text-stroke:0.4px #111;">Program</div>
<div class="a" style="left:1562px;top:1013px;width:72px;height:2px;background:#2d5696;"></div>
<svg style="left:399px;top:190px" width="1156" height="602" viewBox="399 190 1156 602"><defs><linearGradient id="bg3" gradientUnits="userSpaceOnUse" x1="399" y1="190" x2="912.5" y2="1138.1"><stop offset="0" stop-color="#b4b4b4"/><stop offset="1" stop-color="#505050"/></linearGradient><linearGradient id="nv" gradientUnits="userSpaceOnUse" x1="540" y1="600" x2="1160" y2="790"><stop offset="0" stop-color="#000066"/><stop offset="1" stop-color="#000066"/></linearGradient><linearGradient id="inr" gradientUnits="userSpaceOnUse" x1="585" y1="350" x2="690" y2="485"><stop offset="0" stop-color="#4f8686"/><stop offset="0.55" stop-color="#4a9c9c"/><stop offset="1" stop-color="#4ab9b9"/></linearGradient><radialGradient id="btn" cx="0.3" cy="0.75" r="0.9"><stop offset="0" stop-color="#b4b4b4"/><stop offset="1" stop-color="#5e5e5e"/></radialGradient><clipPath id="vc"><rect x="399" y="190" width="1156" height="602"/></clipPath></defs><rect x="399" y="190" width="1156" height="602" fill="url(#bg3)"/><g clip-path="url(#vc)"><path d="M605.5 519 L543 577 L547.5 698 L541 707 L542 734.4 L892 791 L1156 791 L1166 781 L1145.5 766.5 L1168 743 L1150.7 713 L1137 709.7 L1135 694 L713.7 527 L720.4 535.3 L725.4 545.4 Q712 570 697 572.5 Q660 572 640 555 Z" fill="url(#nv)"/><path d="M605.5 519 L543 577 Q580 615 636 630.5 Q672 625 687 596 Q693 580 697 572.5 Q660 572 640 555 Z" fill="#00004a"/><path d="M697 572.5 Q712 568 725.4 545.4 Q729 558 722 570 Q713 578 703 577 Z" fill="#00004e"/><path d="M541 707 L1071 785.5" stroke="#00004e" stroke-width="3" fill="none"/><path d="M975 652 Q962 662 962 686 Q963 705 990 716 L1071 740.7 L1071 792 L1156 792 L1166 781 L1145.5 766.5 L1168 743 L1150.7 713 L1137 709.7 L1135.5 694 L1037.7 679.9 L981 654.6 Z" fill="#00004a"/><path d="M977 703 Q990 712 1000 713" stroke="#0a0a8a" stroke-width="1.5" fill="none" opacity="0.6"/><path d="M710.4 522.8 L738.8 532.8 L755.6 517.7 L1018.8 643.6 Q1045 658 1069 667.3 L1135.5 683 L1135.5 692.5 L1037.7 679.9 L981 654.6 L713.7 527 Z" fill="#1f6060"/><path d="M703.8 241.8 Q735 244 757 256.6 L1089 524 Q1140 540 1175 547 Q1215 558 1230 590 Q1238 610 1232 630 Q1222 652 1200.5 657.5 L1193.8 657.5 Q1190 678 1175.4 688 Q1165 695.5 1150 695.5 L1135.5 694 L1135.5 683 L1069 667.3 Q1045 658 1018.8 643.6 L755.6 517.7 L738.8 532.8 L710.4 522.8 L711.4 522 L653.5 493.2 Q625 482 609 466.5 Q588 448 579.6 431 Q566 410 564.8 386.7 Q563 368 567.7 354.2 Q578 328 594.4 309.8 Q610 295 624 286 Q635 275 647.6 265.5 Q672 248 703.8 241.8 Z" fill="#44bdbd"/><ellipse cx="662.75" cy="398.5" rx="110" ry="82" transform="rotate(49 662.75 398.5)" fill="#44bdbd" /><ellipse cx="668.675" cy="392.65" rx="110" ry="82" transform="rotate(49 668.675 392.65)" fill="#44bdbd" /><ellipse cx="674.6" cy="386.8" rx="110" ry="82" transform="rotate(49 674.6 386.8)" fill="#44bdbd" /><ellipse cx="680.525" cy="380.95" rx="110" ry="82" transform="rotate(49 680.525 380.95)" fill="#44bdbd" /><ellipse cx="686.45" cy="375.1" rx="110" ry="82" transform="rotate(49 686.45 375.1)" fill="#44bdbd" /><ellipse cx="692.375" cy="369.25" rx="110" ry="82" transform="rotate(49 692.375 369.25)" fill="#44bdbd" /><ellipse cx="698.3" cy="363.4" rx="110" ry="82" transform="rotate(49 698.3 363.4)" fill="#44bdbd" /><ellipse cx="704.225" cy="357.55" rx="110" ry="82" transform="rotate(49 704.225 357.55)" fill="#44bdbd" /><ellipse cx="710.15" cy="351.7" rx="110" ry="82" transform="rotate(49 710.15 351.7)" fill="#44bdbd" /><ellipse cx="716.075" cy="345.85" rx="110" ry="82" transform="rotate(49 716.075 345.85)" fill="#44bdbd" /><ellipse cx="722.0" cy="340.0" rx="110" ry="82" transform="rotate(49 722.0 340.0)" fill="#44bdbd" /><ellipse cx="722" cy="340" rx="110" ry="82" transform="rotate(49 722 340)" fill="#4fc4c4" /><defs><linearGradient id="bcr" gradientUnits="userSpaceOnUse" x1="660" y1="255" x2="790" y2="390"><stop offset="0" stop-color="#50c2c2"/><stop offset="0.45" stop-color="#4cb0b0"/><stop offset="1" stop-color="#4ca4a4"/></linearGradient></defs><ellipse cx="722" cy="340" rx="97" ry="70" transform="rotate(49 722 340)" fill="url(#bcr)" /><ellipse cx="662.75" cy="398.5" rx="110" ry="82" transform="rotate(49 662.75 398.5)" fill="#44bdbd" /><defs><clipPath id="fo"><ellipse cx="662.75" cy="398.5" rx="97" ry="70" transform="rotate(49 662.75 398.5)"/></clipPath></defs><ellipse cx="662.75" cy="398.5" rx="97" ry="70" transform="rotate(49 662.75 398.5)" fill="url(#inr)" /><g clip-path="url(#fo)"><ellipse cx="722" cy="340" rx="97" ry="70" transform="rotate(49 722 340)" fill="url(#bg3)" /><ellipse cx="722" cy="340" rx="93" ry="66" transform="rotate(49 722 340)" fill="none" stroke="#47b0b0" stroke-width="9" opacity="0.85"/></g><ellipse cx="773" cy="413" rx="11" ry="6.5" transform="rotate(-28 773 413)" fill="#4a6e6e" opacity="0.85"/><defs><linearGradient id="lw" gradientUnits="userSpaceOnUse" x1="735" y1="0" x2="760" y2="0"><stop offset="0" stop-color="#3b9090"/><stop offset="1" stop-color="#44bdbd" stop-opacity="0"/></linearGradient><filter id="bl" x="-10%" y="-10%" width="120%" height="120%"><feGaussianBlur stdDeviation="1.6"/></filter></defs><path d="M826.6 353.6 L1060 534 Q1072 546 1073 565 L1073 598 Q1071 615 1058 625 L1040 600 L1045 575 Q1040 560 1020 548 L804.9 395 Q806 370 826.6 353.6Z" fill="#3fa9a9" opacity="0.5" filter="url(#bl)"/><path d="M769 420 Q766 440 761 455 Q754 470 746 482 Q741 492 743 502 Q745 510 751 518" stroke="#3a9596" stroke-width="13" fill="none" opacity="0.6" filter="url(#bl)"/><path d="M769.4 505.4 Q900 568 1019 623" stroke="#7ad6d6" stroke-width="2" opacity="0.45" fill="none"/><path d="M1089 536.7 L1059 560 L1089 571 Z" fill="#3a8a8a" opacity="0.75"/><path d="M1192 552 Q1218 565 1230 590 Q1238 610 1232 630 Q1222 652 1200.5 657.5 L1196 656 Q1216 646 1225 626 Q1230 608 1222 590 Q1210 570 1192 558Z" fill="#38a4a4"/><path d="M1184 620 Q1196 637 1195.5 657 Q1192 678 1175.4 688 L1171 686 Q1185 674 1189 654 Q1190 637 1181 623Z" fill="#38a4a4"/><circle cx="1143.5" cy="635.5" r="14" fill="#2f7575"/><ellipse cx="1137.7" cy="643" rx="13" ry="14" fill="#000066"/><defs><clipPath id="h2"><circle cx="1181" cy="603" r="15"/></clipPath></defs><circle cx="1181" cy="603" r="15" fill="#2f7070"/><g clip-path="url(#h2)"><path d="M1160 612 L1200 640 L1160 640Z" fill="#467a7a"/><rect x="1158" y="599" width="48" height="12" transform="rotate(35 1181 605)" fill="#000066"/></g></g><circle cx="439" cy="229.7" r="21.5" fill="url(#btn)" stroke="#3a3a3a" stroke-width="2.6"/><path d="M434.5 258.5H443.5L439 263.5Z" fill="#111"/><circle cx="491" cy="229.7" r="21.5" fill="url(#btn)" stroke="#3a3a3a" stroke-width="2.6"/><path d="M486.5 258.5H495.5L491 263.5Z" fill="#111"/><path d="M429.5 226L436 220H449V233.5L443 240H429.5Z" fill="#fff"/><rect x="431" y="227.5" width="11" height="11" fill="#f5b800"/><path d="M443.2 227L447.5 222.5V233L443.2 237.5Z" fill="#f5b800"/><path d="M431.5 226.2L436.5 221.5H447L442.5 226.2Z" fill="#f5b800"/><circle cx="493.5" cy="226.5" r="6" fill="none" stroke="#fff" stroke-width="2.2"/><path d="M489 231L482.5 237.5" stroke="#fff" stroke-width="2.6" stroke-linecap="round"/><circle cx="504.8" cy="243.5" r="9" fill="#3a3a3a"/><rect x="500.5" y="239.5" width="8.5" height="8" fill="none" stroke="#fff" stroke-width="1.1" stroke-dasharray="2 1.2"/><path d="M448.3 723 L459.2 713 L481.7 717 L482.6 739 L473.3 749.9 L449.6 746 Z M448.3 723 L471 727 L481.7 717 M471 727 L473.3 749.9 M459.2 713 L460 734 L449.6 746 M460 734 L482.6 739" fill="none" stroke="#fff" stroke-width="1"/><path d="M462 728L468 727L469 734L463 735Z" fill="#1a9a2a"/><path d="M447 702L443.5 718H452Z" fill="#1a1aa0"/><path d="M493 752L477 747L478 755Z" fill="#e01a1a"/></svg>
</body></html>
